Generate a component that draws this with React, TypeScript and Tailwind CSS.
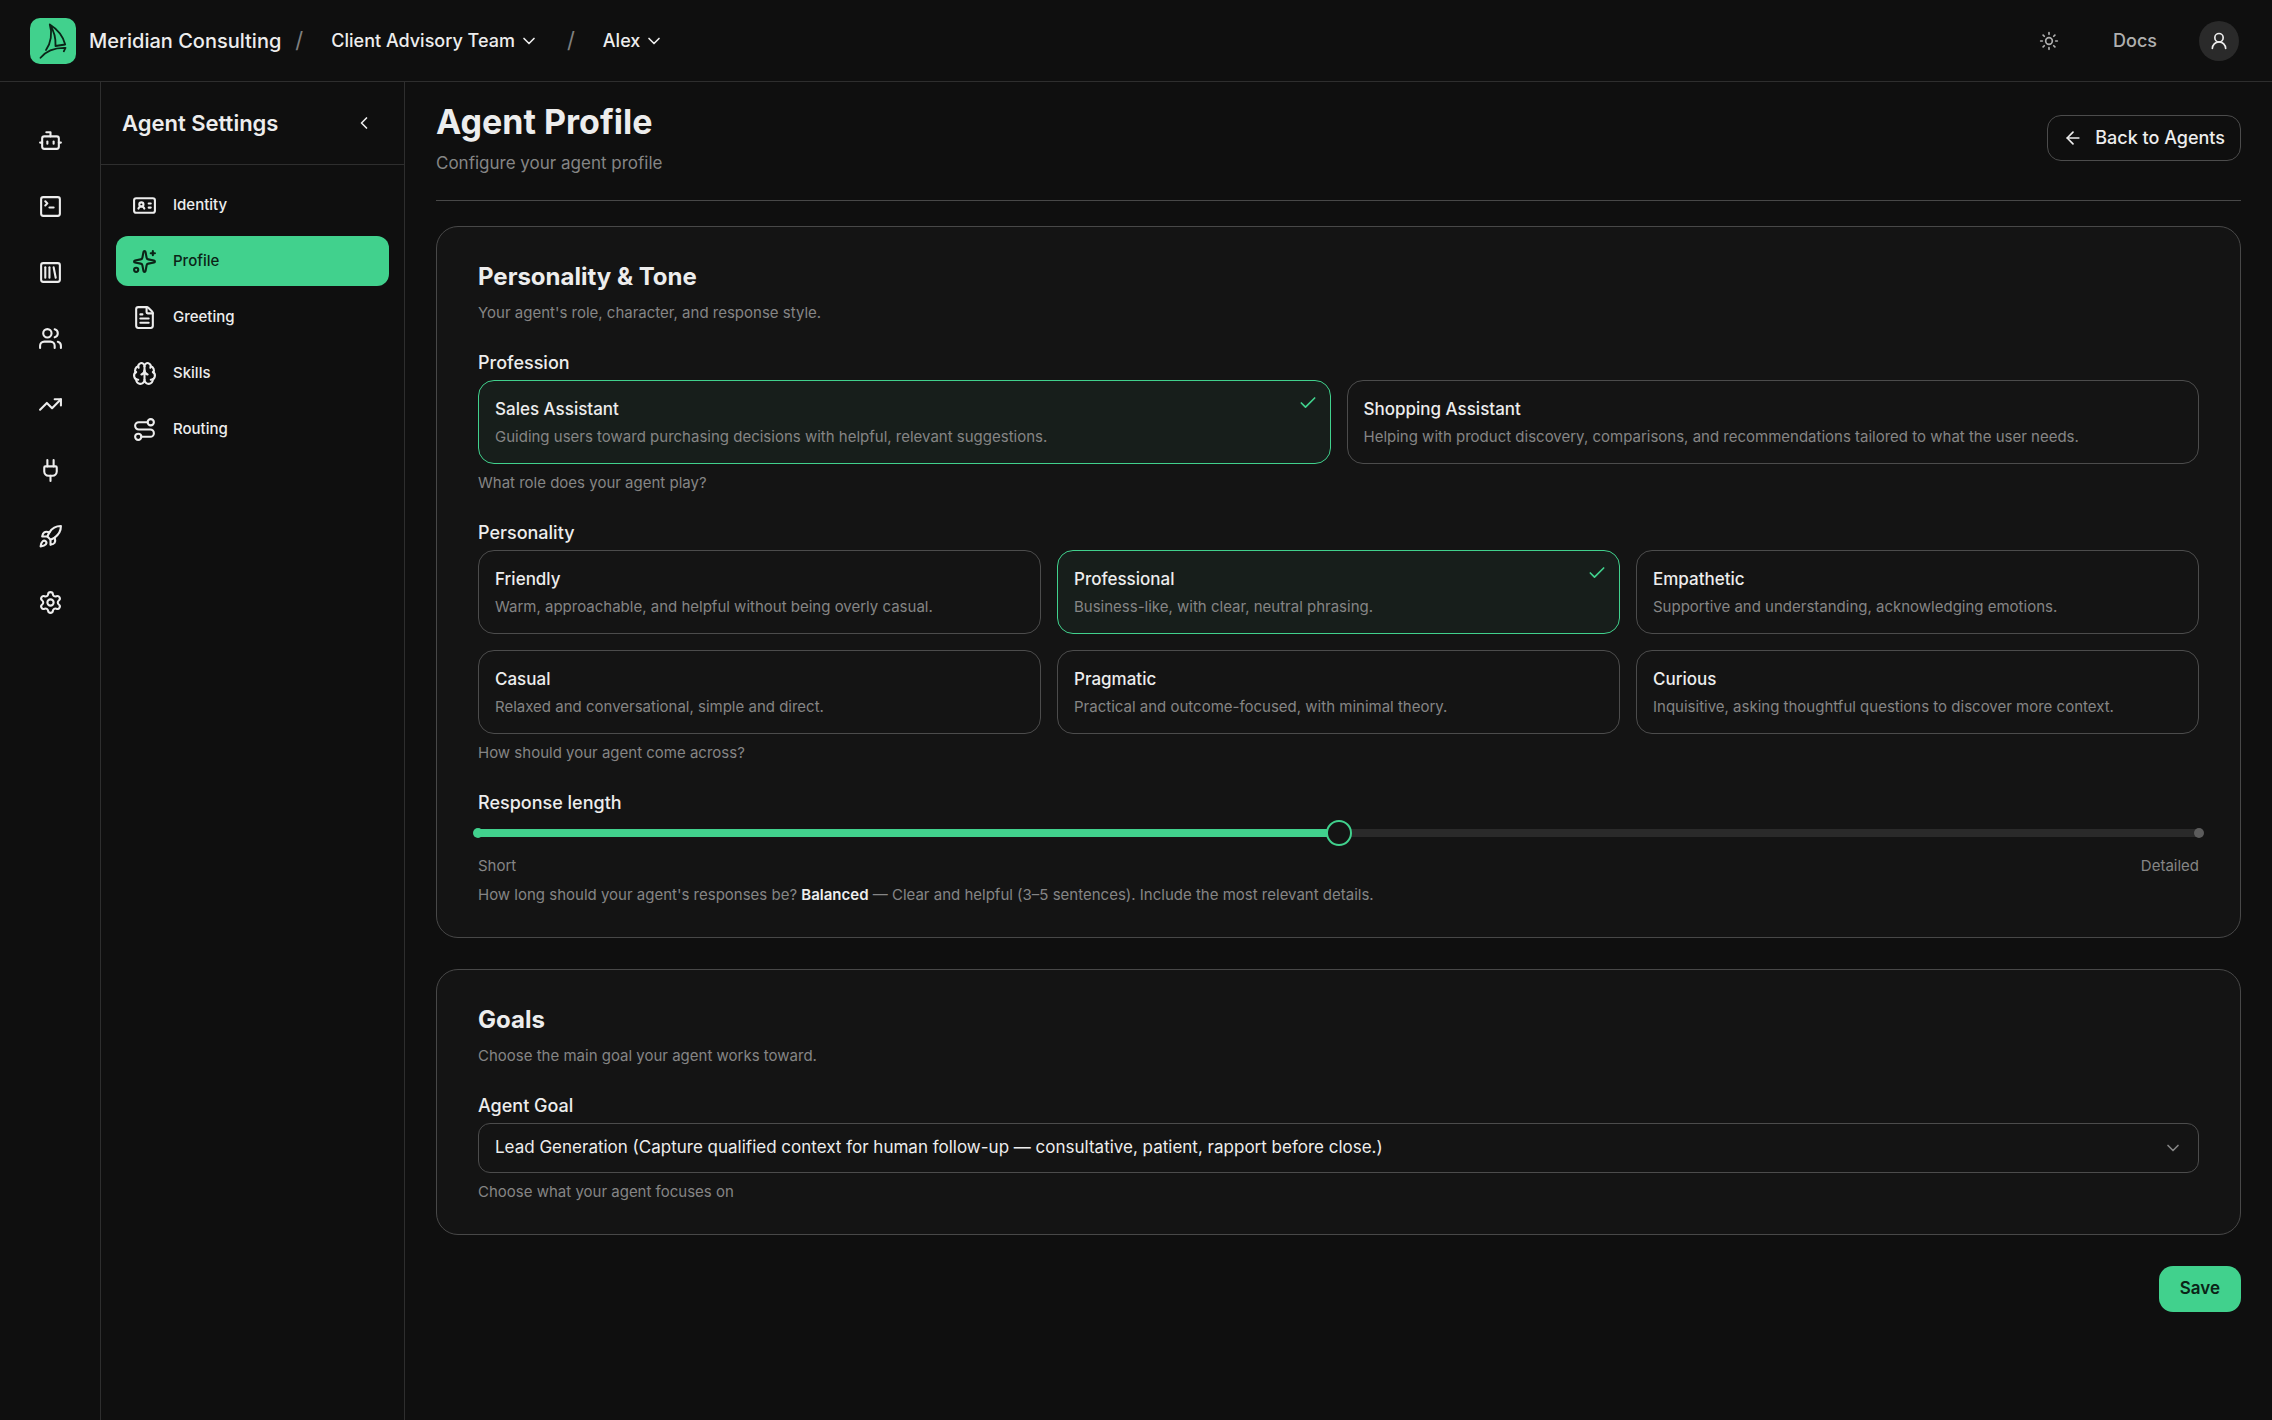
import { useState } from "react";
import {
  ArrowLeft,
  Bot,
  Brain,
  Check,
  ChevronDown,
  ChevronLeft,
  FileText,
  IdCard,
  Plug,
  Rocket,
  Route,
  Settings,
  Sparkles,
  SquareLibrary,
  SquareTerminal,
  Sun,
  TrendingUp,
  UserRound,
  Users,
} from "lucide-react";

const railItems = [
  { label: "Agents", icon: Bot },
  { label: "Playground", icon: SquareTerminal },
  { label: "Library", icon: SquareLibrary },
  { label: "Users", icon: Users },
  { label: "Analytics", icon: TrendingUp },
  { label: "Integrations", icon: Plug },
  { label: "Deploy", icon: Rocket },
  { label: "Settings", icon: Settings },
];

const settingsItems = [
  { label: "Identity", icon: IdCard },
  { label: "Profile", icon: Sparkles },
  { label: "Greeting", icon: FileText },
  { label: "Skills", icon: Brain },
  { label: "Routing", icon: Route },
];

const professions = [
  { title: "Sales Assistant", text: "Guiding users toward purchasing decisions with helpful, relevant suggestions." },
  {
    title: "Shopping Assistant",
    text: "Helping with product discovery, comparisons, and recommendations tailored to what the user needs.",
  },
];

const personalities = [
  { title: "Friendly", text: "Warm, approachable, and helpful without being overly casual." },
  { title: "Professional", text: "Business-like, with clear, neutral phrasing." },
  { title: "Empathetic", text: "Supportive and understanding, acknowledging emotions." },
  { title: "Casual", text: "Relaxed and conversational, simple and direct." },
  { title: "Pragmatic", text: "Practical and outcome-focused, with minimal theory." },
  { title: "Curious", text: "Inquisitive, asking thoughtful questions to discover more context." },
];

const lengths = [
  { name: "Concise", text: "Brief and direct (1–2 sentences). Only the essentials." },
  { name: "Balanced", text: "Clear and helpful (3–5 sentences). Include the most relevant details." },
  { name: "Detailed", text: "Thorough and complete (6+ sentences). Cover the full context." },
];

function Logo() {
  return (
    <svg viewBox="0 0 46 46" className="size-[46px]" fill="none" aria-hidden="true">
      <rect width="46" height="46" rx="10" fill="#41d18d" />
      <g stroke="#0b2417" strokeWidth="1.8" strokeLinecap="round" strokeLinejoin="round">
        <path d="M16 32C21 25 22.500 15 19.800 6.500C27 11 33 18 35.200 26.500L25.500 28C26 20 24 13 19.800 6.500" />
        <path d="M10.500 39.800C15.500 33.500 24 29.500 35.500 29.800L33.800 33.300" />
      </g>
    </svg>
  );
}

type OptionProps = {
  name: string;
  title: string;
  text: string;
  checked: boolean;
  onSelect: () => void;
};

function Option({ name, title, text, checked, onSelect }: OptionProps) {
  return (
    <label
      className={`relative block cursor-pointer rounded-2xl border px-4 pt-[14px] pb-3 ${
        checked ? "border-[#41d18d] bg-[#171e1b]" : "border-[#4c4c4c]"
      }`}
    >
      <input type="radio" name={name} checked={checked} onChange={onSelect} className="sr-only" />
      <span className="block text-[17px] leading-7 font-medium">{title}</span>
      <span className="block text-[15px] leading-7 text-[#858585]">{text}</span>
      {checked && <Check className="absolute top-3 right-3 size-5 text-[#41d18d]" />}
    </label>
  );
}

export default function App() {
  const [profession, setProfession] = useState("Sales Assistant");
  const [personality, setPersonality] = useState("Professional");
  const [length, setLength] = useState(1);

  return (
    <div className="flex min-h-screen flex-col bg-[#0f0f0f] font-['Inter',sans-serif] text-[#ededed]">
      {/* Top bar */}
      <header className="flex h-[82px] items-center justify-between border-b border-[#2e2e2e] pr-[33px] pl-[30px]">
        <div className="flex items-center">
          <a href="#home" className="flex items-center gap-[13px] text-xl font-medium">
            <Logo />
            Meridian Consulting
          </a>
          <span className="ml-[14px] text-[22px] text-[#808080]">/</span>
          <button type="button" className="ml-7 flex items-center gap-1 text-lg font-medium">
            Client Advisory Team
            <ChevronDown className="size-5" />
          </button>
          <span className="ml-7 text-[22px] text-[#808080]">/</span>
          <button type="button" className="ml-7 flex items-center gap-1 text-lg font-medium">
            Alex
            <ChevronDown className="size-5" />
          </button>
        </div>
        <div className="flex items-center text-[#b0b0b0]">
          <button type="button" aria-label="Toggle theme">
            <Sun className="size-5" />
          </button>
          <a href="#docs" className="ml-[54px] text-lg font-medium">
            Docs
          </a>
          <button
            type="button"
            aria-label="Account"
            className="ml-[42px] flex size-10 items-center justify-center rounded-full bg-[#2a2a2a] text-[#ededed]"
          >
            <UserRound className="size-5" />
          </button>
        </div>
      </header>

      <div className="flex grow">
        {/* Icon rail */}
        <nav aria-label="Main" className="flex w-[101px] shrink-0 flex-col items-center gap-[18px] border-r border-[#2e2e2e] pt-[34px]">
          {railItems.map(({ label, icon: Icon }) => (
            <a key={label} href={`#${label.toLowerCase()}`} aria-label={label} className="flex size-12 items-center justify-center">
              <Icon className="size-[25px]" />
            </a>
          ))}
        </nav>

        {/* Settings menu */}
        <aside className="w-[304px] shrink-0 border-r border-[#2e2e2e]">
          <div className="flex h-[83px] items-center justify-between border-b border-[#2e2e2e] pr-[30px] pl-[21px]">
            <h2 className="text-[22px] font-semibold">Agent Settings</h2>
            <button type="button" aria-label="Collapse menu">
              <ChevronLeft className="size-5" />
            </button>
          </div>
          <nav aria-label="Agent settings" className="flex flex-col gap-[6px] px-[15px] pt-[15px]">
            {settingsItems.map(({ label, icon: Icon }) => (
              <a
                key={label}
                href={`#${label.toLowerCase()}`}
                className={`flex h-[50px] items-center gap-4 rounded-xl px-4 text-[15px] font-medium ${
                  label === "Profile" ? "bg-[#41d18d] text-[#0b2417]" : ""
                }`}
              >
                <Icon className="size-[25px]" />
                {label}
              </a>
            ))}
          </nav>
        </aside>

        <main className="grow px-[31px] pb-10">
          <div className="flex items-center justify-between border-b border-[#484848] pt-[17px] pb-[23px]">
            <div>
              <h1 className="text-[34px] leading-[46px] font-bold">Agent Profile</h1>
              <p className="mt-1 text-[17px] leading-7 text-[#858585]">Configure your agent profile</p>
            </div>
            <a
              href="#agents"
              className="flex h-[46px] items-center gap-3 rounded-[14px] border border-[#4c4c4c] px-[15px] text-lg font-medium"
            >
              <ArrowLeft className="size-5" />
              Back to Agents
            </a>
          </div>

          <form onSubmit={(e) => e.preventDefault()} className="mt-[25px] flex flex-col gap-[31px]">
            {/* Personality & tone */}
            <section className="rounded-[22px] border border-[#484848] bg-[#141414] px-[41px] pt-[34px] pb-[30px]">
              <h2 className="text-2xl leading-8 font-bold">Personality &amp; Tone</h2>
              <p className="mt-2 text-[15px] leading-6 text-[#858585]">Your agent's role, character, and response style.</p>

              <fieldset className="mt-6">
                <legend className="mb-[3px] text-lg leading-7 font-medium">Profession</legend>
                <div className="grid grid-cols-2 gap-4">
                  {professions.map((p) => (
                    <Option
                      key={p.title}
                      name="profession"
                      title={p.title}
                      text={p.text}
                      checked={profession === p.title}
                      onSelect={() => setProfession(p.title)}
                    />
                  ))}
                </div>
                <p className="mt-[7px] text-[15px] leading-6 text-[#858585]">What role does your agent play?</p>
              </fieldset>

              <fieldset className="mt-6">
                <legend className="mb-[3px] text-lg leading-7 font-medium">Personality</legend>
                <div className="grid grid-cols-3 gap-4">
                  {personalities.map((p) => (
                    <Option
                      key={p.title}
                      name="personality"
                      title={p.title}
                      text={p.text}
                      checked={personality === p.title}
                      onSelect={() => setPersonality(p.title)}
                    />
                  ))}
                </div>
                <p className="mt-[7px] text-[15px] leading-6 text-[#858585]">How should your agent come across?</p>
              </fieldset>

              <div className="mt-6">
                <label htmlFor="response-length" className="block text-lg leading-7 font-medium">
                  Response length
                </label>
                <div className="relative mt-[3px] flex h-[26px] items-center">
                  <div className="h-2 w-full bg-[#2a2a2a]">
                    <div className="h-full bg-[#41d18d]" style={{ width: `${length * 50}%` }} />
                  </div>
                  <span className="absolute -left-[5px] size-[10px] rounded-full bg-[#41d18d]" />
                  <span className="absolute -right-[5px] size-[10px] rounded-full bg-[#5c5c5c]" />
                  <span
                    className="absolute size-[26px] -translate-x-1/2 rounded-full border-2 border-[#41d18d] bg-[#141414]"
                    style={{ left: `${length * 50}%` }}
                  />
                  <input
                    id="response-length"
                    type="range"
                    min={0}
                    max={2}
                    value={length}
                    onChange={(e) => setLength(Number(e.target.value))}
                    className="absolute inset-0 w-full cursor-pointer opacity-0"
                  />
                </div>
                <div className="mt-2 flex justify-between text-[15px] leading-6 text-[#858585]">
                  <span>Short</span>
                  <span>Detailed</span>
                </div>
                <p className="mt-[5px] text-[15px] leading-6 text-[#858585]">
                  How long should your agent's responses be?{" "}
                  <span className="font-semibold text-[#ededed]">{lengths[length].name}</span> — {lengths[length].text}
                </p>
              </div>
            </section>

            {/* Goals */}
            <section className="rounded-[22px] border border-[#484848] bg-[#141414] px-[41px] pt-[34px] pb-[30px]">
              <h2 className="text-2xl leading-8 font-bold">Goals</h2>
              <p className="mt-2 text-[15px] leading-6 text-[#858585]">Choose the main goal your agent works toward.</p>
              <label htmlFor="agent-goal" className="mt-6 mb-[3px] block text-lg leading-7 font-medium">
                Agent Goal
              </label>
              <div className="relative flex items-center">
                <select
                  id="agent-goal"
                  className="h-[50px] w-full appearance-none rounded-xl border border-[#4c4c4c] bg-transparent px-4 text-[17px]"
                >
                  <option>
                    Lead Generation (Capture qualified context for human follow-up — consultative, patient, rapport before close.)
                  </option>
                </select>
                <ChevronDown className="pointer-events-none absolute right-4 size-5 text-[#858585]" />
              </div>
              <p className="mt-[7px] text-[15px] leading-6 text-[#858585]">Choose what your agent focuses on</p>
            </section>

            <button
              type="submit"
              className="h-[46px] self-end rounded-[14px] bg-[#41d18d] px-[21px] text-[17px] font-semibold text-[#0b2417]"
            >
              Save
            </button>
          </form>
        </main>
      </div>
    </div>
  );
}
